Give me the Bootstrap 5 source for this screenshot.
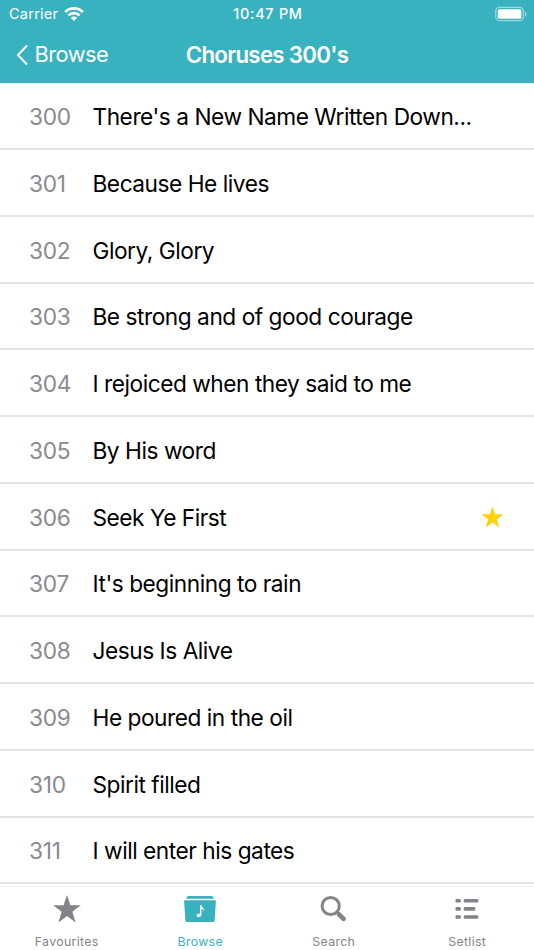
<!DOCTYPE html>
<html lang="en">
<head>
<meta charset="utf-8">
<meta name="viewport" content="width=device-width, initial-scale=1">
<title>Choruses 300's</title>
<link href="https://cdn.jsdelivr.net/npm/bootstrap@5.3.0/dist/css/bootstrap.min.css" rel="stylesheet">
<style>
  body { font-family: Inter, "Liberation Sans", sans-serif; color: #000; letter-spacing: -.5px; }
  .app { height: 950px; }
  .top-area { background: #38b2be; color: #fff; height: 82.5px; flex: none; }
  .status { height: 27px; font-size: 14.5px; line-height: 27px; padding: 0 7px 0 9px; letter-spacing: .25px; }
  .clock { font-weight: 500; font-size: 14.4px; letter-spacing: .75px; }
  .titlebar { height: 55.5px; padding: 0 16px; font-size: 21.800px; line-height: 55px; }
  .back-label { margin-left: 6.500px; }
  .heading { font-size: 22.3px; font-weight: 600; line-height: 55px; letter-spacing: -.7px; }
  .songs { height: 803.5px; flex: none; padding-top: .75px; }
  .songs .song { height: 66.75px; flex: none; border: 0; border-bottom: 2px solid #e4e4e6; border-radius: 0; padding: 3px 30.500px 0 29px; color: #000; font-size: 22.7px; line-height: 32px; }
  .num { width: 64px; flex: none; color: #8a8a8f; letter-spacing: -.25px; }
  .songs .song span + span { margin-left: -.5px; letter-spacing: -.47px; }
  .tabs { height: 64px; border-top: 1px solid #ececee; color: #838389; font-size: 12.3px; letter-spacing: .35px; line-height: 16px; }
  .tabs .tab-item { flex: 1 1 0; height: 63px; padding-top: 5px; color: inherit; text-decoration: none; }
  .tabs .tab-item svg { margin-bottom: 8px; }
  .tabs .current { color: #38b2be; }
  svg { display: block; flex: none; }
</style>
<script src="https://cdn.jsdelivr.net/npm/bootstrap@5.3.0/dist/js/bootstrap.bundle.min.js"></script>
</head>
<body class="bg-white overflow-hidden">
<div class="app d-flex flex-column overflow-hidden">
  <header class="top-area">
    <div class="status row g-0 align-items-center">
      <div class="col d-flex align-items-center"><span class="me-1">Carrier</span>
        <svg width="24" height="16" viewBox="-2 0 24 16" fill="none" stroke="#fff" stroke-width="2.600"><path d="M1.200 6a12.500 12.500 0 0 1 17.600 0M4.400 9.400a8 8 0 0 1 11.200 0"/><path d="M10 15l-3.200-3.200a4.600 4.600 0 0 1 6.400 0z" fill="#fff" stroke="none"/></svg>
      </div>
      <div class="col-auto clock">10:47 PM</div>
      <div class="col d-flex justify-content-end">
        <svg width="32" height="16" viewBox="0 0 32 16"><rect x=".8" y="1.300" width="27.500" height="13.400" rx="3.800" fill="none" stroke="#fff" stroke-opacity=".5" stroke-width="1.300"/><rect x="2.800" y="3.300" width="23.500" height="9.400" rx="1.500" fill="#fff"/><path d="M30 5.800c2 .8 2 4 0 4.800z" fill="#fff" fill-opacity=".55"/></svg>
      </div>
    </div>
    <nav class="titlebar row g-0 align-items-center">
      <a class="col d-flex align-items-center text-white text-decoration-none" href="#" id="back">
        <svg width="12" height="22" viewBox="0 0 12 22" fill="none" stroke="#fff" stroke-width="2"><path d="M11 1.500L2 11l9 9.500"/></svg><span class="back-label">Browse</span>
      </a>
      <h1 class="col-auto heading m-0">Choruses 300's</h1>
      <div class="col"></div>
    </nav>
  </header>

  <main class="songs list-group rounded-0 overflow-hidden">
    <div class="song list-group-item d-flex align-items-center"><span class="num">300</span><span>There's a New Name Written Down...</span></div>
    <div class="song list-group-item d-flex align-items-center"><span class="num">301</span><span>Because He lives</span></div>
    <div class="song list-group-item d-flex align-items-center"><span class="num">302</span><span>Glory, Glory</span></div>
    <div class="song list-group-item d-flex align-items-center"><span class="num">303</span><span>Be strong and of good courage</span></div>
    <div class="song list-group-item d-flex align-items-center"><span class="num">304</span><span>I rejoiced when they said to me</span></div>
    <div class="song list-group-item d-flex align-items-center"><span class="num">305</span><span>By His word</span></div>
    <div class="song list-group-item d-flex align-items-center"><span class="num">306</span><span>Seek Ye First</span>
      <svg class="ms-auto" width="23" height="24" viewBox="0 0 24 25" fill="#fdd20a"><path d="M12 .5l2.800 8.200h8.700l-7 5.200 2.600 8.600-7.100-5.200-7.100 5.200 2.600-8.600-7-5.200h8.700z"/></svg></div>
    <div class="song list-group-item d-flex align-items-center"><span class="num">307</span><span>It's beginning to rain</span></div>
    <div class="song list-group-item d-flex align-items-center"><span class="num">308</span><span>Jesus Is Alive</span></div>
    <div class="song list-group-item d-flex align-items-center"><span class="num">309</span><span>He poured in the oil</span></div>
    <div class="song list-group-item d-flex align-items-center"><span class="num">310</span><span>Spirit filled</span></div>
    <div class="song list-group-item d-flex align-items-center"><span class="num">311</span><span>I will enter his gates</span></div>
  </main>

  <nav class="tabs d-flex bg-white text-center">
    <a class="tab-item d-flex flex-column align-items-center" href="#">
      <svg width="34" height="34" viewBox="0 0 34 34" fill="currentColor"><path d="M17 3l3.400 10.300h10.400l-8.400 6.500 3.200 10.700L17 24l-8.600 6.500 3.200-10.700-8.400-6.500h10.400z"/></svg><span>Favourites</span></a>
    <a class="tab-item current d-flex flex-column align-items-center" href="#">
      <svg width="34" height="34" viewBox="0 0 34 34" fill="currentColor"><path d="M3.500 6.800V6q0-2 2-2h23q2 0 2 2v.8z"/><path d="M2 8.300h30q1 0 .9 1l-1.300 19.200q-.1 1.500-1.600 1.500H4q-1.500 0-1.600-1.500L1.100 9.300q-.1-1 .9-1z"/><path fill="#fff" d="M17 13.200h1.500c.3 2.400 3.600 3 2.500 6.500-.3-1.500-1.300-2.300-2.500-2.600v5.300c0 3.100-5 3.500-5 1.200 0-1.700 2-2.300 3.500-1.800z"/></svg><span>Browse</span></a>
    <a class="tab-item d-flex flex-column align-items-center" href="#">
      <svg width="34" height="34" viewBox="0 0 34 34" fill="none" stroke="currentColor"><circle cx="13.700" cy="14" r="8.600" stroke-width="3"/><path d="M19.800 20.100l2 2" stroke-width="3"/><path d="M22 22.300l4.600 4.600" stroke-width="4.600" stroke-linecap="round"/></svg><span>Search</span></a>
    <a class="tab-item d-flex flex-column align-items-center" href="#">
      <svg width="34" height="34" viewBox="0 0 34 34" fill="currentColor"><rect x="5.500" y="6.900" width="5.300" height="3.600" rx="1.200"/><rect x="13.800" y="6.900" width="14.500" height="3.600" rx="1.200"/><rect x="5.500" y="15.100" width="5.300" height="3.600" rx="1.200"/><rect x="13.800" y="15.100" width="11.500" height="3.600" rx="1.200"/><rect x="5.500" y="23.200" width="5.300" height="3.600" rx="1.200"/><rect x="13.800" y="23.200" width="14.500" height="3.600" rx="1.200"/></svg><span>Setlist</span></a>
  </nav>
</div>
</body>
</html>
